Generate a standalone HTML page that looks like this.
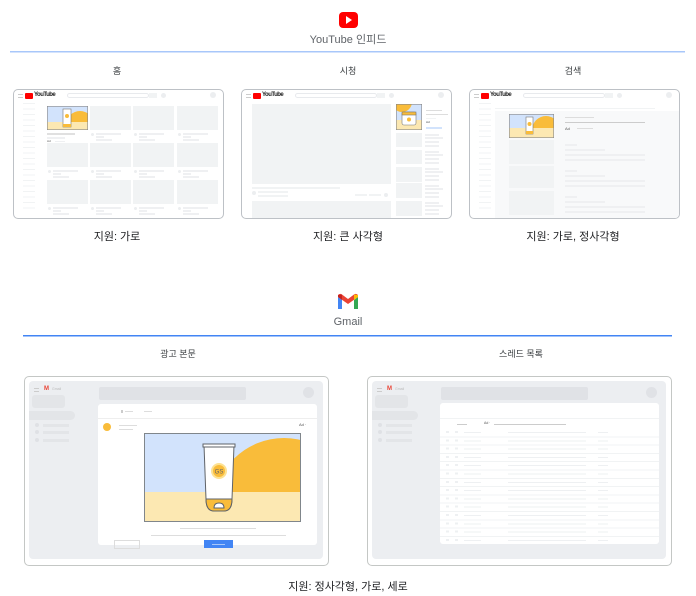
<!DOCTYPE html>
<html><head><meta charset="utf-8"><style>
*{margin:0;padding:0;box-sizing:border-box}
body{width:696px;height:596px;background:#fff;position:relative;overflow:hidden;font-family:"Liberation Sans","Noto Sans CJK KR",sans-serif;color:#3c4043}
div{position:absolute}
.t{width:100%;text-align:center}
.fr{border:1.5px solid #bdc1c6;border-radius:5px;background:#fff;overflow:hidden}
.g{background:#f1f3f4}
.m{background:#eff0f2;height:1.5px}
.c{border-radius:50%;background:#eceef0}
.gm{background:#e3e5e8}
</style></head><body>

<!-- YouTube header -->
<div style="left:339px;top:12px;width:19px;height:16px;background:#f00;border-radius:4px"></div>
<div style="left:346px;top:16px;width:0;height:0;border-left:6px solid #fff;border-top:4px solid transparent;border-bottom:4px solid transparent"></div>
<div class="t" style="top:31px;font-size:11px;color:#5f6368">YouTube 인피드</div>
<svg style="position:absolute;left:10px;top:50px" width="675" height="3"><rect x="0" y="1" width="675" height="1.5" fill="#a8c7fa"/></svg>

<div style="left:67px;top:64px;width:100px;text-align:center;font-size:9px">홈</div>
<div style="left:298px;top:64px;width:100px;text-align:center;font-size:9px">시청</div>
<div style="left:523px;top:64px;width:100px;text-align:center;font-size:9px">검색</div>

<!-- Frame 1 -->
<div class="fr" style="left:13px;top:89px;width:211px;height:130px">
 <div style="left:4px;top:4px;width:5px;height:4px;border-top:1px solid #ccc;border-bottom:1px solid #ccc"></div>
 <div style="left:11px;top:3px;width:8px;height:6px;background:#f00;border-radius:1px"></div>
 <div style="left:20px;top:2px;font-size:6px;font-weight:bold;letter-spacing:-0.5px;color:#222">YouTube</div>
 <div style="left:53px;top:3px;width:82px;height:5px;border:1px solid #e8eaed;border-radius:3px"></div>
 <div class="g" style="left:135px;top:3px;width:8px;height:5px"></div>
 <div class="c" style="left:147px;top:3px;width:5px;height:5px"></div>
 <div class="c" style="left:196px;top:2px;width:6px;height:6px"></div>
 <div style="left:9px;top:13px;width:12px;height:110px;background:repeating-linear-gradient(#f1f3f4 0 1px,transparent 1px 5.5px)"></div>
 <svg style="position:absolute;left:33px;top:16px" width="41" height="24" viewBox="0 0 41 24"><rect width="41" height="24" fill="#d2e3fc"/><circle cx="33" cy="19" r="14" fill="#f9bc3a"/><rect y="16" width="41" height="8" fill="#fce8b2"/><rect x="16" y="3" width="8" height="18" fill="#fff" stroke="#777" stroke-width=".6"/><circle cx="20" cy="10" r="2" fill="#f9bc3a"/><rect x="16" y="18" width="8" height="3" fill="#f9bc3a"/><rect x=".3" y=".3" width="40.4" height="23.4" fill="none" stroke="#888" stroke-width=".6"/></svg>
 <div class="m" style="left:33px;top:43px;width:28px;background:#e0e0e0"></div>
 <div class="m" style="left:33px;top:47px;width:18px"></div>
 <div style="left:33px;top:49px;font-size:3px;color:#555">Ad</div><div class="m" style="left:41px;top:51px;width:10px;height:1px"></div>
 <div class="g" style="left:76px;top:16px;width:41px;height:24px"></div>
 <div class="g" style="left:119px;top:16px;width:41px;height:24px"></div>
 <div class="g" style="left:163px;top:16px;width:41px;height:24px"></div>
 <div class="g" style="left:33px;top:53px;width:41px;height:24px"></div>
 <div class="g" style="left:76px;top:53px;width:41px;height:24px"></div>
 <div class="g" style="left:119px;top:53px;width:41px;height:24px"></div>
 <div class="g" style="left:163px;top:53px;width:41px;height:24px"></div>
 <div class="g" style="left:33px;top:90px;width:41px;height:24px"></div>
 <div class="g" style="left:76px;top:90px;width:41px;height:24px"></div>
 <div class="g" style="left:119px;top:90px;width:41px;height:24px"></div>
 <div class="g" style="left:163px;top:90px;width:41px;height:24px"></div>
 <div class="c" style="left:77px;top:43px;width:3px;height:3px"></div><div class="m" style="left:82px;top:43px;width:25px"></div><div class="m" style="left:82px;top:46px;width:8px"></div><div class="m" style="left:82px;top:49px;width:16px"></div>
 <div class="c" style="left:120px;top:43px;width:3px;height:3px"></div><div class="m" style="left:125px;top:43px;width:25px"></div><div class="m" style="left:125px;top:46px;width:8px"></div><div class="m" style="left:125px;top:49px;width:16px"></div>
 <div class="c" style="left:164px;top:43px;width:3px;height:3px"></div><div class="m" style="left:169px;top:43px;width:25px"></div><div class="m" style="left:169px;top:46px;width:8px"></div><div class="m" style="left:169px;top:49px;width:16px"></div>
 <div class="c" style="left:34px;top:80px;width:3px;height:3px"></div><div class="m" style="left:39px;top:80px;width:25px"></div><div class="m" style="left:39px;top:83px;width:8px"></div><div class="m" style="left:39px;top:86px;width:16px"></div>
 <div class="c" style="left:77px;top:80px;width:3px;height:3px"></div><div class="m" style="left:82px;top:80px;width:25px"></div><div class="m" style="left:82px;top:83px;width:8px"></div><div class="m" style="left:82px;top:86px;width:16px"></div>
 <div class="c" style="left:120px;top:80px;width:3px;height:3px"></div><div class="m" style="left:125px;top:80px;width:25px"></div><div class="m" style="left:125px;top:83px;width:8px"></div><div class="m" style="left:125px;top:86px;width:16px"></div>
 <div class="c" style="left:164px;top:80px;width:3px;height:3px"></div><div class="m" style="left:169px;top:80px;width:25px"></div><div class="m" style="left:169px;top:83px;width:8px"></div><div class="m" style="left:169px;top:86px;width:16px"></div>
 <div class="c" style="left:34px;top:117px;width:3px;height:3px"></div><div class="m" style="left:39px;top:117px;width:25px"></div><div class="m" style="left:39px;top:120px;width:8px"></div><div class="m" style="left:39px;top:123px;width:16px"></div>
 <div class="c" style="left:77px;top:117px;width:3px;height:3px"></div><div class="m" style="left:82px;top:117px;width:25px"></div><div class="m" style="left:82px;top:120px;width:8px"></div><div class="m" style="left:82px;top:123px;width:16px"></div>
 <div class="c" style="left:120px;top:117px;width:3px;height:3px"></div><div class="m" style="left:125px;top:117px;width:25px"></div><div class="m" style="left:125px;top:120px;width:8px"></div><div class="m" style="left:125px;top:123px;width:16px"></div>
 <div class="c" style="left:164px;top:117px;width:3px;height:3px"></div><div class="m" style="left:169px;top:117px;width:25px"></div><div class="m" style="left:169px;top:120px;width:8px"></div><div class="m" style="left:169px;top:123px;width:16px"></div>
</div>

<!-- Frame 2 -->
<div class="fr" style="left:241px;top:89px;width:211px;height:130px">
 <div style="left:4px;top:4px;width:5px;height:4px;border-top:1px solid #ccc;border-bottom:1px solid #ccc"></div>
 <div style="left:11px;top:3px;width:8px;height:6px;background:#f00;border-radius:1px"></div>
 <div style="left:20px;top:2px;font-size:6px;font-weight:bold;letter-spacing:-0.5px;color:#222">YouTube</div>
 <div style="left:53px;top:3px;width:82px;height:5px;border:1px solid #e8eaed;border-radius:3px"></div>
 <div class="g" style="left:135px;top:3px;width:8px;height:5px"></div>
 <div class="c" style="left:147px;top:3px;width:5px;height:5px"></div>
 <div class="c" style="left:196px;top:2px;width:6px;height:6px"></div>
 <div class="g" style="left:10px;top:14px;width:139px;height:80px"></div>
 <div class="g" style="left:10px;top:97px;width:88px;height:2px"></div>
 <div class="c" style="left:10px;top:101px;width:4px;height:4px"></div>
 <div class="g" style="left:16px;top:101px;width:30px;height:2px"></div>
 <div class="g" style="left:16px;top:105px;width:30px;height:2px"></div>
 <div class="g" style="left:113px;top:104px;width:12px;height:2px"></div>
 <div class="g" style="left:127px;top:104px;width:12px;height:2px"></div>
 <div class="c" style="left:142px;top:103px;width:4px;height:4px"></div>
 <div class="g" style="left:10px;top:111px;width:139px;height:20px"></div>
 <svg style="position:absolute;left:154px;top:14px" width="26" height="26" viewBox="0 0 26 26"><rect width="26" height="26" fill="#d2e3fc"/><circle cx="6" cy="-2" r="10" fill="#f9bc3a"/><rect y="16" width="26" height="10" fill="#fce8b2"/><rect x="6" y="8" width="14" height="13" rx="2" fill="#fff" stroke="#777" stroke-width=".6"/><rect x="6" y="8" width="14" height="3" fill="#f9bc3a" stroke="#777" stroke-width=".6"/><circle cx="13" cy="15.5" r="2" fill="#f9bc3a"/><rect x=".3" y=".3" width="25.4" height="25.4" fill="none" stroke="#888" stroke-width=".6"/></svg>
 <div style="left:184px;top:20px;width:16px;height:1px;background:#ddd"></div>
 <div style="left:184px;top:24px;width:22px;height:1px;background:#ddd"></div>
 <div class="g" style="left:184px;top:28px;width:10px;height:1px"></div>
 <div style="left:184px;top:30px;font-size:3px">Ad</div>
 <div style="left:184px;top:37px;width:16px;height:2px;background:#d2e3fc"></div>
 <div class="g" style="left:154px;top:43px;width:26px;height:14px"></div>
 <div class="g" style="left:154px;top:60px;width:26px;height:14px"></div>
 <div class="g" style="left:154px;top:77px;width:26px;height:15px"></div>
 <div class="g" style="left:154px;top:93px;width:26px;height:15px"></div>
 <div class="g" style="left:154px;top:111px;width:26px;height:15px"></div>
 <div class="m" style="left:183px;top:44px;width:14px"></div><div class="m" style="left:183px;top:47px;width:18px"></div><div class="m" style="left:183px;top:51px;width:14px"></div><div class="m" style="left:183px;top:55px;width:14px"></div>
 <div class="m" style="left:183px;top:61px;width:14px"></div><div class="m" style="left:183px;top:64px;width:18px"></div><div class="m" style="left:183px;top:68px;width:14px"></div><div class="m" style="left:183px;top:72px;width:14px"></div>
 <div class="m" style="left:183px;top:78px;width:14px"></div><div class="m" style="left:183px;top:81px;width:18px"></div><div class="m" style="left:183px;top:85px;width:14px"></div><div class="m" style="left:183px;top:89px;width:14px"></div>
 <div class="m" style="left:183px;top:95px;width:14px"></div><div class="m" style="left:183px;top:98px;width:18px"></div><div class="m" style="left:183px;top:102px;width:14px"></div><div class="m" style="left:183px;top:106px;width:14px"></div>
 <div class="m" style="left:183px;top:112px;width:14px"></div><div class="m" style="left:183px;top:115px;width:18px"></div><div class="m" style="left:183px;top:119px;width:14px"></div><div class="m" style="left:183px;top:123px;width:14px"></div>
</div>

<!-- Frame 3 -->
<div class="fr" style="left:469px;top:89px;width:211px;height:130px">
 <div style="left:4px;top:4px;width:5px;height:4px;border-top:1px solid #ccc;border-bottom:1px solid #ccc"></div>
 <div style="left:11px;top:3px;width:8px;height:6px;background:#f00;border-radius:1px"></div>
 <div style="left:20px;top:2px;font-size:6px;font-weight:bold;letter-spacing:-0.5px;color:#222">YouTube</div>
 <div style="left:53px;top:3px;width:82px;height:5px;border:1px solid #e8eaed;border-radius:3px"></div>
 <div class="g" style="left:135px;top:3px;width:8px;height:5px"></div>
 <div class="c" style="left:147px;top:3px;width:5px;height:5px"></div>
 <div class="c" style="left:196px;top:2px;width:6px;height:6px"></div>
 <div style="left:9px;top:13px;width:12px;height:110px;background:repeating-linear-gradient(#f1f3f4 0 1px,transparent 1px 5.5px)"></div>
 <div style="left:25px;top:18px;width:160px;height:1px;background:#f1f3f4"></div>
 <div style="left:25px;top:21px;width:184px;height:110px;background:#f8f9fa"></div>
 <svg style="position:absolute;left:39px;top:24px" width="45" height="24" viewBox="0 0 45 24"><rect width="45" height="24" fill="#d2e3fc"/><circle cx="37" cy="16" r="14" fill="#f9bc3a"/><rect y="14" width="45" height="10" fill="#fce8b2"/><rect x="17" y="3" width="7" height="17" fill="#fff" stroke="#777" stroke-width=".6"/><circle cx="20.5" cy="10" r="2" fill="#f9bc3a"/><rect x="17" y="17" width="7" height="3" fill="#f9bc3a"/><rect x=".3" y=".3" width="44.4" height="23.4" fill="none" stroke="#888" stroke-width=".6"/></svg>
 <div style="left:95px;top:27px;width:29px;height:1px;background:#ddd"></div>
 <div style="left:95px;top:32px;width:80px;height:1px;background:#ccc"></div>
 <div style="left:95px;top:36px;font-size:4px;color:#555">Ad</div>
 <div style="left:107px;top:38px;width:16px;height:1px;background:#ddd"></div>
 <div class="g" style="left:39px;top:50px;width:45px;height:24px"></div>
 <div class="g" style="left:39px;top:76px;width:45px;height:22px"></div>
 <div class="g" style="left:39px;top:101px;width:45px;height:24px"></div>
 <div class="m" style="left:95px;top:54px;width:12px"></div><div class="m" style="left:95px;top:59px;width:40px"></div><div class="m" style="left:95px;top:64px;width:80px"></div><div class="m" style="left:95px;top:69px;width:80px"></div>
 <div class="m" style="left:95px;top:80px;width:12px"></div><div class="m" style="left:95px;top:85px;width:40px"></div><div class="m" style="left:95px;top:90px;width:80px"></div><div class="m" style="left:95px;top:95px;width:80px"></div>
 <div class="m" style="left:95px;top:106px;width:12px"></div><div class="m" style="left:95px;top:111px;width:40px"></div><div class="m" style="left:95px;top:116px;width:80px"></div><div class="m" style="left:95px;top:121px;width:80px"></div>
</div>

<div style="left:67px;top:228px;width:100px;text-align:center;font-size:11px;color:#202124">지원: 가로</div>
<div style="left:268px;top:228px;width:160px;text-align:center;font-size:11px;color:#202124">지원: 큰 사각형</div>
<div style="left:493px;top:228px;width:160px;text-align:center;font-size:11px;color:#202124">지원: 가로, 정사각형</div>

<!-- Gmail header -->
<svg style="position:absolute;left:337px;top:293px" width="22" height="17" viewBox="0 0 22 17"><path d="M1 4 L1 16 L5 16 L5 7 Z" fill="#4285f4"/><path d="M17 7 L17 16 L21 16 L21 4 Z" fill="#34a853"/><path d="M1 4 L11 11 L21 4 L21 2 Q19 0 17 1.5 L11 6 L5 1.5 Q3 0 1 2 Z" fill="#ea4335"/><path d="M17 1.5 L21 2 L21 4 L17 7Z" fill="#fbbc04"/><path d="M1 2 L1 4 L5 7 L5 1.5Z" fill="#c5221f"/></svg>
<div class="t" style="top:316px;font-size:11px;color:#5f6368">Gmail</div>
<svg style="position:absolute;left:23px;top:334px" width="649" height="3"><rect x="0" y="1" width="649" height="1.5" fill="#4285f4"/></svg>

<div style="left:118px;top:347px;width:120px;text-align:center;font-size:9px">광고 본문</div>
<div style="left:461px;top:347px;width:120px;text-align:center;font-size:9px">스레드 목록</div>

<!-- Gmail left -->
<div class="fr" style="left:24px;top:376px;width:305px;height:190px;border-color:#c4c7c5">
 <div style="left:4px;top:4px;width:294px;height:178px;background:#eceef1;border-radius:4px"></div>
 <div style="left:9px;top:11px;width:5px;height:4px;border-top:1px solid #ccc;border-bottom:1px solid #ccc"></div>
 <div style="left:19px;top:9px;font-size:6px;color:#ea4335;font-weight:bold">M</div>
 <div style="left:27px;top:10px;font-size:3.5px;color:#bbb">Gmail</div>
 <div class="gm" style="left:7px;top:18px;width:33px;height:13px;border-radius:3px"></div>
 <div class="gm" style="left:4px;top:34px;width:46px;height:9px;border-radius:0 5px 5px 0"></div>
 <div class="c" style="left:10px;top:46px;width:4px;height:4px;background:#dfe1e5"></div><div class="gm" style="left:18px;top:47px;width:26px;height:3px"></div>
 <div class="c" style="left:10px;top:53px;width:4px;height:4px;background:#dfe1e5"></div><div class="gm" style="left:18px;top:54px;width:26px;height:3px"></div>
 <div class="c" style="left:10px;top:61px;width:4px;height:4px;background:#dfe1e5"></div><div class="gm" style="left:18px;top:62px;width:26px;height:3px"></div>
 <div style="left:74px;top:10px;width:147px;height:13px;background:#e0e2e6;border-radius:2px"></div>
 <div class="c" style="left:278px;top:10px;width:11px;height:11px;background:#e0e2e6"></div>
 <div style="left:73px;top:27px;width:219px;height:141px;background:#fff;border-radius:3px"></div>
 <div style="left:73px;top:41px;width:219px;height:1px;background:#eee"></div>
 <div style="left:96px;top:33px;width:2px;height:3px;background:#ccc"></div><div style="left:100px;top:34px;width:8px;height:1px;background:#ddd"></div>
 <div style="left:119px;top:34px;width:8px;height:1px;background:#ddd"></div>
 <div class="c" style="left:78px;top:46px;width:8px;height:8px;background:#f9bc3a"></div>
 <div style="left:94px;top:48px;width:18px;height:1px;background:#ddd"></div><div style="left:94px;top:52px;width:14px;height:1px;background:#ddd"></div>
 <div style="left:274px;top:45px;font-size:4px;color:#555">Ad ·</div>
 <svg style="position:absolute;left:119px;top:56px" width="157" height="89" viewBox="0 0 157 89"><rect width="157" height="89" fill="#d2e3fc"/><circle cx="140" cy="76" r="71" fill="#f9bc3a"/><rect y="59" width="157" height="30" fill="#fce8b2"/><path d="M60 12 L90 12 L88 66 Q88 78 80 78 L70 78 Q62 78 62 66 Z" fill="#fff" stroke="#5f6368" stroke-width="1"/><rect x="59" y="11" width="32" height="3" fill="#fff" stroke="#5f6368" stroke-width="1"/><path d="M62 66 L88 66 Q88 78 80 78 L70 78 Q62 78 62 66Z" fill="#f9bc3a" stroke="#5f6368" stroke-width="1"/><path d="M70 75 Q70 70 75 70 Q80 70 80 75Z" fill="#fff" stroke="#5f6368" stroke-width="1"/><circle cx="75" cy="38" r="8" fill="#fde293"/><circle cx="75" cy="38" r="6" fill="#f9bc3a"/><text x="75" y="40.5" font-size="6" text-anchor="middle" fill="#5f6368" font-family="Liberation Sans">GS</text><rect x=".5" y=".5" width="156" height="88" fill="none" stroke="#80868b" stroke-width="1"/></svg>
 <div style="left:155px;top:151px;width:76px;height:1px;background:#ddd"></div>
 <div style="left:126px;top:158px;width:135px;height:1px;background:#ddd"></div>
 <div style="left:89px;top:163px;width:26px;height:9px;border:1px solid #ddd"></div>
 <div style="left:179px;top:163px;width:29px;height:8px;background:#4285f4"></div>
 <div style="left:187px;top:167px;width:13px;height:1px;background:#a8c7fa"></div>
</div>

<!-- Gmail right -->
<div class="fr" style="left:367px;top:376px;width:305px;height:190px;border-color:#c4c7c5">
 <div style="left:4px;top:4px;width:294px;height:178px;background:#eceef1;border-radius:4px"></div>
 <div style="left:9px;top:11px;width:5px;height:4px;border-top:1px solid #ccc;border-bottom:1px solid #ccc"></div>
 <div style="left:19px;top:9px;font-size:6px;color:#ea4335;font-weight:bold">M</div>
 <div style="left:27px;top:10px;font-size:3.5px;color:#bbb">Gmail</div>
 <div class="gm" style="left:7px;top:18px;width:33px;height:13px;border-radius:3px"></div>
 <div class="gm" style="left:4px;top:34px;width:46px;height:9px;border-radius:0 5px 5px 0"></div>
 <div class="c" style="left:10px;top:46px;width:4px;height:4px;background:#dfe1e5"></div><div class="gm" style="left:18px;top:47px;width:26px;height:3px"></div>
 <div class="c" style="left:10px;top:53px;width:4px;height:4px;background:#dfe1e5"></div><div class="gm" style="left:18px;top:54px;width:26px;height:3px"></div>
 <div class="c" style="left:10px;top:61px;width:4px;height:4px;background:#dfe1e5"></div><div class="gm" style="left:18px;top:62px;width:26px;height:3px"></div>
 <div style="left:73px;top:10px;width:147px;height:13px;background:#e0e2e6;border-radius:2px"></div>
 <div class="c" style="left:278px;top:10px;width:11px;height:11px;background:#e0e2e6"></div>
 <div style="left:72px;top:26px;width:219px;height:141px;background:#fff;border-radius:3px"></div>
 <div style="left:72px;top:41px;width:219px;height:1px;background:#f1f3f4"></div>
 <div style="left:89px;top:47px;width:10px;height:1px;background:#ccc"></div>
 <div style="left:116px;top:44px;font-size:3.5px;color:#555">Ad ·</div>
 <div style="left:126px;top:47px;width:72px;height:1px;background:#ccc"></div>
 <div style="left:72px;top:52px;width:219px;height:115px;background:repeating-linear-gradient(transparent 0 7.3px,#f1f3f4 7.3px 8.3px)"></div>
 <div style="left:78px;top:54px;width:3px;height:112px;background:repeating-linear-gradient(#eef0f2 0 2px,transparent 2px 8.3px)"></div>
 <div style="left:87px;top:54px;width:3px;height:112px;background:repeating-linear-gradient(#eef0f2 0 2px,transparent 2px 8.3px)"></div>
 <div style="left:96px;top:55px;width:17px;height:112px;background:repeating-linear-gradient(#eef0f2 0 1px,transparent 1px 8.3px)"></div>
 <div style="left:140px;top:55px;width:78px;height:112px;background:repeating-linear-gradient(#eef0f2 0 1px,transparent 1px 8.3px)"></div>
 <div style="left:230px;top:55px;width:10px;height:112px;background:repeating-linear-gradient(#eef0f2 0 1px,transparent 1px 8.3px)"></div>
</div>

<div style="left:248px;top:578px;width:200px;text-align:center;font-size:11px;color:#202124">지원: 정사각형, 가로, 세로</div>
</body></html>
